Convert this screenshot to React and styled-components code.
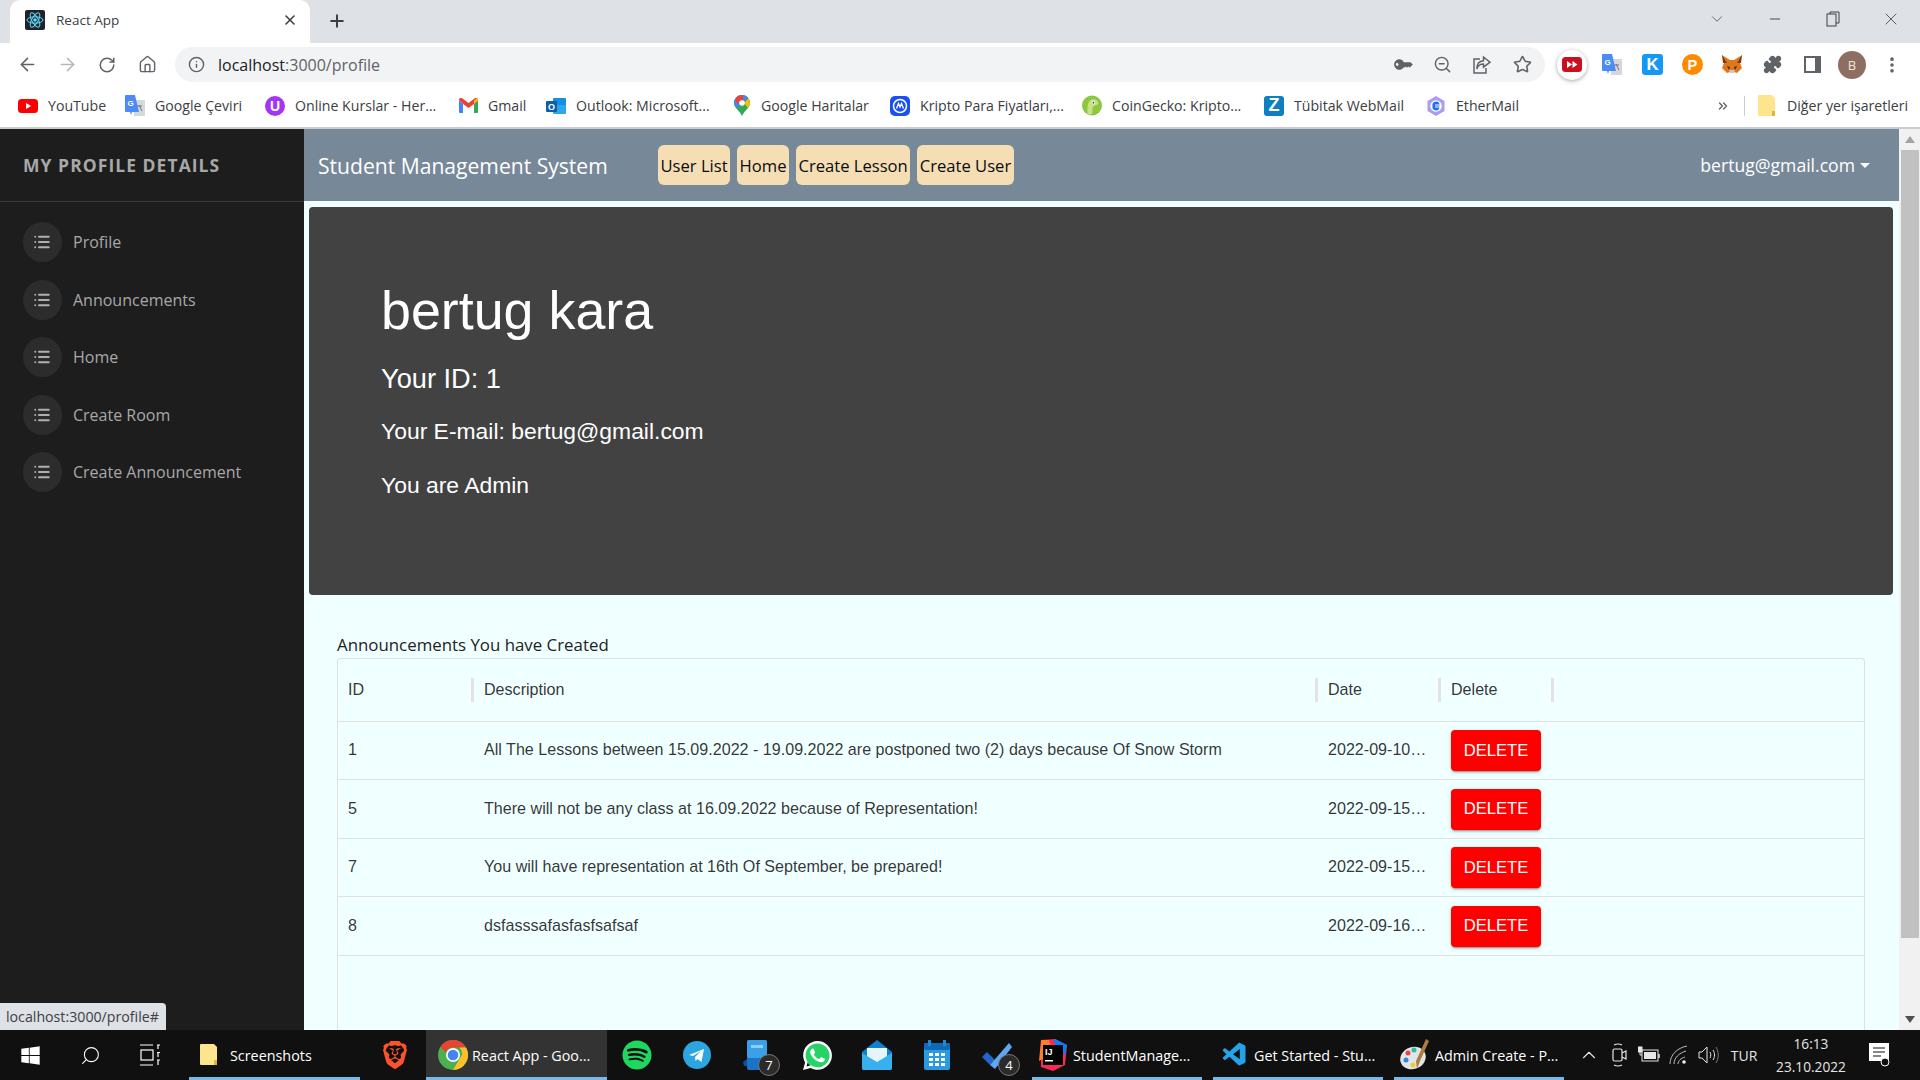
import React from "react";
import styled, { createGlobalStyle } from "styled-components";
import {
  ArrowLeft,
  ArrowRight,
  RotateCw,
  Home as HomeIcon,
  Info,
  ZoomOut,
  Star,
  List,
  X,
  Plus,
  ChevronDown,
  Minus,
  Search,
  ChevronUp,
  MoreVertical,
  Puzzle,
  ChevronsRight,
} from "lucide-react";
import { FaSpotify, FaWhatsapp, FaWindows, FaKey } from "react-icons/fa";
import { SiBrave } from "react-icons/si";
import { VscVscode } from "react-icons/vsc";

const UI = `"Open Sans", "Noto Sans", sans-serif`;
const ARIAL = `"Liberation Sans", Arial, sans-serif`;
const COLUMNS = "136px 844px 123px 113px 1fr";

const GlobalStyle = createGlobalStyle`
  html, body { margin: 0; padding: 0; overflow: hidden; }
  body { font-family: ${UI}; }
  * { box-sizing: border-box; }
`;

const Screen = styled.div`
  position: relative;
  width: 1920px;
  height: 1080px;
  display: flex;
  flex-direction: column;
  overflow: hidden;
  background: #fff;
`;

/* browser chrome */
const TabStrip = styled.div`
  height: 43px;
  flex: none;
  display: flex;
  align-items: stretch;
  padding-left: 10px;
  background: #dee1e6;
`;
const Tab = styled.div`
  width: 300px;
  display: flex;
  align-items: center;
  padding: 0 12px 3px 15px;
  background: #fff;
  border-radius: 10px 10px 0 0;
`;
const TabTitle = styled.span`
  flex: 1;
  margin-left: 11px;
  font-size: 13.5px;
  color: #3c4043;
`;
const NewTab = styled.div`
  width: 54px;
  display: flex;
  align-items: center;
  justify-content: center;
  padding-bottom: 2px;
  color: #3c4043;
`;
const WindowControls = styled.div`
  margin-left: auto;
  display: flex;
  align-items: center;
  padding-bottom: 5px;
  color: #3c4043;
`;
const WindowButton = styled.div`
  width: 58px;
  display: flex;
  justify-content: center;
`;
const Toolbar = styled.div`
  height: 43px;
  flex: none;
  display: flex;
  align-items: center;
  padding-left: 7px;
  background: #fff;
`;
const NavButton = styled.div`
  width: 40px;
  height: 36px;
  flex: none;
  display: flex;
  align-items: center;
  justify-content: center;
  color: ${(p) => (p.$off ? "#b6b8bb" : "#5f6368")};
`;
const AddressPill = styled.div`
  margin-left: 8px;
  width: 1370px;
  height: 35px;
  display: flex;
  align-items: center;
  padding: 0 3px 0 13px;
  background: #f1f3f4;
  border-radius: 18px;
  color: #5f6368;
`;
const AddressText = styled.div`
  flex: 1;
  margin-left: 13px;
  font-size: 16px;
  color: #5f6368;
  b { font-weight: 400; color: #202124; }
`;
const Extensions = styled.div`
  margin-left: 7px;
  display: flex;
`;
const Avatar = styled.div`
  width: 28px;
  height: 28px;
  border-radius: 50%;
  background: #8d6e63;
  color: #f1e4df;
  font-size: 13px;
  display: flex;
  align-items: center;
  justify-content: center;
`;
const YoutubeRing = styled.div`
  width: 30px;
  height: 30px;
  border-radius: 50%;
  background: #fff;
  box-shadow: 0 1px 4px rgba(0, 0, 0, 0.35);
  display: flex;
  align-items: center;
  justify-content: center;
`;
const BookmarksBar = styled.div`
  height: 43px;
  flex: none;
  display: flex;
  align-items: center;
  padding: 0 13px 2px 18px;
  background: #fff;
  border-bottom: 2px solid #c9cbce;
`;
const Bookmark = styled.div`
  width: ${(p) => p.$w}px;
  flex: none;
  display: flex;
  align-items: center;
  gap: 10px;
  font-size: 14.15px;
  color: #3c4043;
  white-space: nowrap;
`;
const BookmarkIcon = styled.span`
  width: ${(p) => p.$w || 20}px;
  height: 20px;
  flex: none;
  display: flex;
  align-items: center;
  justify-content: center;
`;
const OtherBookmarks = styled.div`
  margin-left: auto;
  display: flex;
  align-items: center;
  color: #5f6368;
`;
const Divider = styled.div`
  width: 1px;
  height: 20px;
  margin: 0 12px 0 14px;
  background: #c9cbce;
`;

/* page */
const Viewport = styled.div`
  flex: 1;
  min-height: 0;
  display: flex;
  overflow: hidden;
`;
const Sidebar = styled.aside`
  width: 304px;
  flex: none;
  background: #1d1d1d;
`;
const SidebarHeader = styled.div`
  height: 73px;
  display: flex;
  align-items: center;
  padding: 0 0 1px 23px;
  border-bottom: 1px solid #3a3a3a;
  font-size: 17.5px;
  font-weight: 700;
  letter-spacing: 1.05px;
  color: #a8a8a8;
`;
const SideList = styled.div`
  padding-top: 20px;
  padding-left: 23px;
  display: flex;
  flex-direction: column;
  gap: 17.5px;
`;
const SideItem = styled.a`
  height: 40px;
  display: flex;
  align-items: center;
  gap: 11px;
  font-size: 16px;
  color: #a8a8a8;
`;
const SideIcon = styled.span`
  width: 39px;
  height: 40px;
  padding-right: 1px;
  border-radius: 50%;
  background: #2c2c2c;
  display: flex;
  align-items: center;
  justify-content: center;
  color: #b0b0b0;
`;
const Main = styled.main`
  flex: 1;
  min-width: 0;
  background: #f0ffff;
  display: flex;
  flex-direction: column;
`;
const Navbar = styled.nav`
  height: 72px;
  flex: none;
  display: flex;
  align-items: center;
  padding: 0 29px 0 14px;
  background: #778899;
`;
const Brand = styled.div`
  width: 340px;
  font-size: 21.1px;
  color: #fff;
`;
const NavLinks = styled.div`
  display: flex;
  gap: 7px;
`;
const NavLink = styled.button`
  height: 40px;
  padding: 0 2.5px;
  border: 0;
  border-radius: 6px;
  background: #f5deb3;
  color: #0a0a14;
  font-family: ${UI};
  font-size: 16.6px;
`;
const UserMenu = styled.div`
  margin-left: auto;
  display: flex;
  align-items: center;
  gap: 5px;
  font-size: 17.6px;
  color: #fff;
  &::after {
    content: "";
    border-top: 5.5px solid #fff;
    border-left: 5.5px solid transparent;
    border-right: 5.5px solid transparent;
  }
`;
const ProfileCard = styled.section`
  height: 388px;
  flex: none;
  margin: 6px 6px 0 5px;
  padding: 70px 0 0 72px;
  background: #424242;
  border-radius: 4px;
  color: #fff;
  font-family: ${ARIAL};
`;
const Name = styled.h1`
  margin: 0 0 19px;
  font-size: 53.8px;
  line-height: 66px;
  font-weight: 400;
`;
const IdLine = styled.h3`
  margin: 0 0 22px;
  font-size: 27.2px;
  line-height: 33px;
  font-weight: 400;
`;
const InfoLine = styled.h4`
  margin: 0 0 25px;
  font-size: 22.9px;
  line-height: 29px;
  font-weight: 400;
`;
const TableSection = styled.section`
  flex: 1;
  min-height: 0;
  padding: 38px 34px 0 33px;
  display: flex;
  flex-direction: column;
`;
const TableTitle = styled.div`
  height: 25px;
  font-size: 16.85px;
  line-height: 24px;
  color: #222;
`;
const Grid = styled.div`
  flex: 1;
  border: 1px solid #e0e0e0;
  border-bottom: 0;
  border-radius: 4px 4px 0 0;
  font-family: ${ARIAL};
  font-size: 16.1px;
  color: rgba(0, 0, 0, 0.8);
`;
const GridHeader = styled.div`
  height: 63px;
  display: grid;
  grid-template-columns: ${COLUMNS};
  align-items: center;
  border-bottom: 1px solid #e0e0e0;
`;
const HeaderCell = styled.div`
  height: 24px;
  padding: 0 10px;
  line-height: 22px;
  border-right: ${(p) => (p.$plain ? "0" : "3px solid #e4e2e4")};
`;
const GridRow = styled.div`
  height: 58.45px;
  display: grid;
  grid-template-columns: ${COLUMNS};
  align-items: center;
  border-bottom: 1px solid #e0e0e0;
`;
const Cell = styled.div`
  padding: 0 10px 2px;
  white-space: nowrap;
`;
const DeleteButton = styled.button`
  display: block;
  width: 90px;
  height: 41px;
  margin-bottom: -2px;
  border: 0;
  border-radius: 4px;
  background: #ff0000;
  color: #fff;
  font-family: ${ARIAL};
  font-size: 16.6px;
  box-shadow: 0 3px 1px -2px rgba(0, 0, 0, 0.2), 0 2px 2px rgba(0, 0, 0, 0.14), 0 1px 5px rgba(0, 0, 0, 0.12);
`;
const Scrollbar = styled.div`
  width: 21px;
  flex: none;
  display: flex;
  flex-direction: column;
  align-items: center;
  padding: 0 1px 0 2px;
  background: #f1f1f1;
`;
const ScrollArrow = styled.div`
  height: 21px;
  flex: none;
  display: flex;
  align-items: center;
  justify-content: center;
  &::after {
    content: "";
    border-left: 5px solid transparent;
    border-right: 5px solid transparent;
    ${(p) => (p.$down ? "border-top: 7px solid #505050;" : "border-bottom: 7px solid #a3a3a3;")}
  }
`;
const ScrollThumb = styled.div`
  width: 100%;
  height: 788px;
  background: #c1c1c1;
`;
const ScrollSpace = styled.div`
  flex: 1;
`;
const StatusBubble = styled.div`
  position: absolute;
  left: 0;
  bottom: 50px;
  height: 27px;
  padding: 0 7px 0 6px;
  display: flex;
  align-items: center;
  background: #dee1e6;
  border-top-right-radius: 4px;
  font-size: 14.2px;
  color: #3c4043;
`;

/* taskbar */
const Taskbar = styled.footer`
  height: 50px;
  flex: none;
  display: flex;
  align-items: stretch;
  background: #101010;
  color: #fff;
`;
const TaskSlot = styled.div`
  position: relative;
  width: 60px;
  flex: none;
  margin-left: ${(p) => p.$ml || 0}px;
  display: flex;
  align-items: center;
  justify-content: center;
`;
const TaskApp = styled.div`
  width: ${(p) => p.$w}px;
  flex: none;
  margin-left: ${(p) => p.$ml || 0}px;
  display: flex;
  align-items: center;
  gap: ${(p) => p.$gap}px;
  padding: 3px 0 0 ${(p) => p.$pad}px;
  font-size: 14.35px;
  white-space: nowrap;
  background: ${(p) => (p.$active ? "#333" : "transparent")};
  border-bottom: 3px solid #76b9ed;
`;
const CountBadge = styled.span`
  position: absolute;
  right: 7px;
  bottom: 4px;
  width: 22px;
  height: 22px;
  border-radius: 50%;
  background: #2b2b2b;
  border: 1px solid #777;
  font-size: 13px;
  display: flex;
  align-items: center;
  justify-content: center;
`;
const WhatsappMark = styled.span`
  position: relative;
  width: 33px;
  height: 33px;
  display: flex;
  align-items: center;
  justify-content: center;
  color: #fff;
  &::before {
    content: "";
    position: absolute;
    inset: 4px;
    border-radius: 50%;
    background: #25d366;
  }
  svg { position: relative; }
`;
const Tray = styled.div`
  margin-left: 10px;
  flex: 1;
  display: flex;
  align-items: center;
`;
const TrayIcon = styled.span`
  width: 30px;
  flex: none;
  display: flex;
  justify-content: center;
  color: #e6e6e6;
`;
const TrayLang = styled.span`
  width: 40px;
  margin-right: 4px;
  text-align: center;
  font-size: 14px;
  color: #e6e6e6;
`;
const Clock = styled.div`
  width: 90px;
  margin-left: -2px;
  text-align: center;
  font-size: 13.7px;
  line-height: 23px;
  color: #e6e6e6;
`;
const Notify = styled.span`
  margin-left: 13px;
  display: flex;
`;

const ReactLogo = () => (
  <svg width="20" height="20" viewBox="0 0 20 20">
    <rect width="20" height="20" rx="2" fill="#20232a" />
    <circle cx="10" cy="10" r="1.8" fill="#61dafb" />
    <g fill="none" stroke="#61dafb" strokeWidth="1">
      <ellipse cx="10" cy="10" rx="8" ry="3.2" />
      <ellipse cx="10" cy="10" rx="8" ry="3.2" transform="rotate(60 10 10)" />
      <ellipse cx="10" cy="10" rx="8" ry="3.2" transform="rotate(120 10 10)" />
    </g>
  </svg>
);
const Youtube = ({ w = 20, h = 14, fill = "#f00" }) => (
  <svg width={w} height={h} viewBox="0 0 20 14">
    <rect width="20" height="14" rx="3.5" fill={fill} />
    <path d="M8 4l5.2 3L8 10z" fill="#fff" />
  </svg>
);
const FastForward = () => (
  <svg width="20" height="15" viewBox="0 0 20 15">
    <rect width="20" height="15" rx="3.5" fill="#cc0f1e" />
    <path d="M5 4l5 3.500-5 3.500zM10.500 4l5 3.500-5 3.500z" fill="#fff" />
  </svg>
);
const ShareIcon = () => (
  <svg width="20" height="20" viewBox="0 0 20 20" fill="none" stroke="#5f6368" strokeWidth="1.5">
    <path d="M8 4H2v14h12v-5" />
    <path d="M11.500 2l6.500 5.200-6.500 5V9C8 9 6 10.500 4.800 14c0-5 2.400-8 6.700-8.300z" />
  </svg>
);
const Translate = () => (
  <svg width="20" height="22" viewBox="0 0 20 22">
    <path d="M8 5h11a1 1 0 0 1 1 1v14a1 1 0 0 1-1 1H9z" fill="#d5d7da" />
    <path d="M14 10l3 6m-6-5h6" stroke="#70757a" strokeWidth="1" fill="none" />
    <path d="M1 0h9l4 17H7l-1 3-1-3H1a1 1 0 0 1-1-1V1a1 1 0 0 1 1-1z" fill="#4c8bf5" />
    <text x="2.5" y="11" fontSize="8" fontWeight="700" fill="#fff" fontFamily="Liberation Sans">G</text>
  </svg>
);
const Letter = ({ bg, color = "#fff", round, text, size = 20, fs = 14 }) => (
  <svg width={size} height={size} viewBox="0 0 20 20">
    {round ? <circle cx="10" cy="10" r="10" fill={bg} /> : <rect width="20" height="20" rx="3" fill={bg} />}
    <text x="10" y="15" textAnchor="middle" fontSize={fs} fontWeight="700" fill={color} fontFamily="Liberation Sans">{text}</text>
  </svg>
);
const CoinMarket = () => (
  <svg width="20" height="20" viewBox="0 0 20 20">
    <rect width="20" height="20" rx="5" fill="#1a50f0" />
    <circle cx="10" cy="10" r="6.500" fill="none" stroke="#fff" strokeWidth="1.500" />
    <path d="M6.500 12.500l2-5 1.500 3.500 1.500-3.500 2 5" fill="none" stroke="#fff" strokeWidth="1.300" />
  </svg>
);
const Gmail = () => (
  <svg width="19" height="15" viewBox="0 0 19 15">
    <path d="M0 2v12a1 1 0 0 0 1 1h3V6z" fill="#4285f4" />
    <path d="M19 2v12a1 1 0 0 1-1 1h-3V6z" fill="#34a853" />
    <path d="M0 2c0-2 2-2.500 3.500-1.500L9.500 5l6-4.500C17-.5 19 0 19 2l-4 4-5.500 4L4 6z" fill="#ea4335" />
    <path d="M15 6l4-4c0-1-.5-1.600-1-1.800L15 2.500z" fill="#fbbc04" />
  </svg>
);
const Outlook = () => (
  <svg width="20" height="20" viewBox="0 0 20 20">
    <rect x="7" y="2" width="13" height="15" rx="1" fill="#1490df" />
    <path d="M7 9h13v8a1 1 0 0 1-1 1H8a1 1 0 0 1-1-1z" fill="#28a8ea" />
    <rect y="5" width="11" height="11" rx="1" fill="#0f5ea8" />
    <text x="5.500" y="14" textAnchor="middle" fontSize="9" fontWeight="700" fill="#fff" fontFamily="Liberation Sans">O</text>
  </svg>
);
const Maps = () => (
  <svg width="16" height="21" viewBox="0 0 16 21">
    <path d="M8 0a8 8 0 0 1 8 8c0 5-6 8-8 13-2-5-8-8-8-13a8 8 0 0 1 8-8z" fill="#34a853" />
    <path d="M8 0a8 8 0 0 1 6.500 3.300L3 13C1 11 0 9.500 0 8a8 8 0 0 1 8-8z" fill="#4285f4" />
    <path d="M3 1.800A8 8 0 0 1 8 0l2 3-6 6-3-4z" fill="#ea4335" />
    <path d="M14.500 3.300A8 8 0 0 1 16 8c0 1.800-1 3.500-2 5L10 8z" fill="#fbbc04" />
    <circle cx="8" cy="8" r="2.800" fill="#fff" />
  </svg>
);
const Gecko = () => (
  <svg width="21" height="21" viewBox="0 0 21 21">
    <circle cx="10.500" cy="10.500" r="10.500" fill="#8dc63f" />
    <path d="M6 20C5 12 6 5 11 4c4-1 7 3 6 5-2 2-6 1-6 5 0 3 0 5-1 6z" fill="#c7e08a" />
    <circle cx="12" cy="7.500" r="1.800" fill="#fff" />
    <circle cx="12" cy="7.500" r="0.900" fill="#333" />
  </svg>
);
const Ether = () => (
  <svg width="20" height="20" viewBox="0 0 20 20">
    <path d="M10 0l8.500 5v10L10 20l-8.500-5V5z" fill="#a99cf2" />
    <circle cx="10" cy="10" r="5.800" fill="#fff" />
    <path d="M6.500 10a3.500 3.500 0 0 1 7-1.500H9v1h4.500v1H9v1h4.500A3.500 3.500 0 0 1 6.500 10z" fill="#1a6ff0" />
  </svg>
);
const Folder = ({ w = 18, h = 22 }) => (
  <svg width={w} height={h} viewBox="0 0 18 22">
    <path d="M1 0h13l3 3v17a1 1 0 0 1-1 1H1a1 1 0 0 1-1-1V1a1 1 0 0 1 1-1z" fill="#fde58e" />
    <path d="M14 16h3v4a1 1 0 0 1-1 1h-2z" fill="#e3b23c" />
  </svg>
);
const Fox = () => (
  <svg width="22" height="20" viewBox="0 0 22 20">
    <path d="M1 0l8 5h4l8-5-2 8 2 5-5 5-3-1h-4l-3 1-5-5 2-5z" fill="#e2761b" />
    <path d="M6 11l3 1-1 3zM16 11l-3 1 1 3z" fill="#233447" />
    <path d="M8 15h6l-1 3H9z" fill="#d7c1b3" />
    <path d="M1 0l5 8-4 0zM21 0l-5 8 4 0z" fill="#763d16" />
  </svg>
);
const SidePanel = () => (
  <svg width="17" height="17" viewBox="0 0 17 17">
    <rect width="17" height="17" fill="#5f6368" />
    <rect x="2" y="2" width="9" height="13" fill="#fff" />
  </svg>
);
const Chrome = () => (
  <svg width="30" height="30" viewBox="0 0 30 30">
    <circle cx="15" cy="15" r="15" fill="#4caf50" />
    <path d="M15 0a15 15 0 0 1 13 7.500H15a7.500 7.500 0 0 0-7 5L2.400 7A15 15 0 0 1 15 0z" fill="#ea4335" />
    <path d="M28 7.500A15 15 0 0 1 15 30l6.500-11a7.500 7.500 0 0 0 0-11.500z" fill="#fbc02d" />
    <circle cx="15" cy="15" r="7" fill="#fff" />
    <circle cx="15" cy="15" r="5.300" fill="#4285f4" />
  </svg>
);
const Telegram = () => (
  <svg width="28" height="28" viewBox="0 0 28 28">
    <circle cx="14" cy="14" r="14" fill="#2ca5e0" />
    <path d="M6 14l15-6-2.500 13-4-3-2 2-.5-4 6-6-8 5z" fill="#fff" />
  </svg>
);
const PhoneApp = () => (
  <svg width="28" height="30" viewBox="0 0 28 30">
    <rect x="4" y="0" width="20" height="30" rx="2" fill="#1a74c4" />
    <rect x="4" y="0" width="20" height="18" rx="2" fill="#3aa0e8" />
    <rect x="8" y="5" width="12" height="3" fill="#8cd0f5" />
    <path d="M0 22l4-3v7H1z" fill="#0f4f9a" />
  </svg>
);
const Mail = () => (
  <svg width="30" height="30" viewBox="0 0 30 30">
    <path d="M15 0l15 12v16a2 2 0 0 1-2 2H2a2 2 0 0 1-2-2V12z" fill="#1280d0" />
    <path d="M5 8h20v10l-10 6-10-6z" fill="#e6f4fc" />
    <path d="M0 13l15 9 15-9v15a2 2 0 0 1-2 2H2a2 2 0 0 1-2-2z" fill="#37b0ee" />
  </svg>
);
const Calendar = () => (
  <svg width="26" height="30" viewBox="0 0 26 30">
    <rect y="3" width="26" height="27" rx="2" fill="#2a9be0" />
    <rect y="3" width="26" height="7" rx="2" fill="#1068b8" />
    <rect x="4" y="0" width="3" height="6" fill="#1f88d0" />
    <rect x="19" y="0" width="3" height="6" fill="#1f88d0" />
    <g fill="#fff">
      <rect x="5" y="13" width="4" height="3" />
      <rect x="11" y="13" width="4" height="3" />
      <rect x="17" y="13" width="4" height="3" />
      <rect x="5" y="18" width="4" height="3" />
      <rect x="11" y="18" width="4" height="3" />
      <rect x="17" y="18" width="4" height="3" />
      <rect x="5" y="23" width="4" height="3" />
      <rect x="11" y="23" width="4" height="3" />
      <rect x="17" y="23" width="4" height="3" />
    </g>
  </svg>
);
const Todo = () => (
  <svg width="30" height="28" viewBox="0 0 30 28">
    <path d="M0 16l5-5 8 8-5 5z" fill="#2564cf" />
    <path d="M8 24L27 2l3 4L13 28z" fill="#5ea7f2" />
  </svg>
);
const IntelliJ = () => (
  <svg width="28" height="32" viewBox="0 0 28 32">
    <path d="M2 1l14-1 12 6-2 20-12 6-12-4z" fill="#fe2857" />
    <path d="M16 0l12 6-2 10L14 2z" fill="#087cfa" />
    <path d="M2 1l8 0 4 14L0 22z" fill="#fe7c2e" />
    <rect x="4" y="6" width="20" height="20" fill="#000" />
    <text x="6" y="16" fontSize="9" fontWeight="700" fill="#fff" fontFamily="Liberation Sans">IJ</text>
    <rect x="6" y="21" width="8" height="1.500" fill="#fff" />
  </svg>
);
const Palette = () => (
  <svg width="30" height="32" viewBox="0 0 30 32">
    <ellipse cx="13" cy="19" rx="13" ry="11" fill="#dfe6ea" transform="rotate(-20 13 19)" />
    <circle cx="8" cy="14" r="2.500" fill="#e44" />
    <circle cx="14" cy="11" r="2.500" fill="#3b9" />
    <circle cx="6" cy="21" r="2.500" fill="#38c" />
    <circle cx="13" cy="26" r="2.500" fill="#ec3" />
    <path d="M26 0l3 2-9 20-3 8-1-8z" fill="#b07b3e" />
  </svg>
);
const TaskView = () => (
  <svg width="20" height="22" viewBox="0 0 20 22" fill="none" stroke="#fff" strokeWidth="1.200">
    <rect x="1" y="6" width="12" height="10" />
    <path d="M0 1h13M0 21h13M17 1h3M17 8.500h3M17 16h3" />
    <path d="M18 1v4M18 8v5M18 16v5" />
  </svg>
);
const MeetIcon = () => (
  <svg width="15" height="28" viewBox="0 0 15 28" fill="none" stroke="#e6e6e6" strokeWidth="1.200">
    <rect x="1" y="8" width="9" height="12" rx="1.500" />
    <path d="M10 12l4-2v8l-4-2M2 4c3-1.500 5-1.500 8 0M2 24c3 1.500 5 1.500 8 0" />
  </svg>
);
const Battery = () => (
  <svg width="22" height="18" viewBox="0 0 22 18" fill="none" stroke="#e6e6e6">
    <rect x="4" y="4" width="16" height="11" />
    <rect x="6" y="6" width="12" height="7" fill="#e6e6e6" stroke="none" />
    <path d="M21 8v4" strokeWidth="1.500" />
    <rect x="0" y="1" width="4" height="5" fill="#e6e6e6" />
    <path d="M2 6v3h2" />
  </svg>
);
const Wifi = () => (
  <svg width="20" height="20" viewBox="0 0 20 20" fill="none" stroke="#bbb">
    <path d="M1 19C1 10 8 3 18 1M5 19C5 13 10 8 17 6M9 19c0-3 3-6 7-7" />
    <circle cx="15" cy="17" r="1.800" fill="#eee" stroke="none" />
  </svg>
);
const Speaker = () => (
  <svg width="22" height="20" viewBox="0 0 22 20" fill="none" stroke="#e6e6e6">
    <path d="M1 7h3l5-5v16l-5-5H1z" />
    <path d="M12 7c1 2 1 4 0 6M15 5c2 3 2 7 0 10" />
    <path d="M18 2c3 5 3 11 0 16" stroke="#777" />
  </svg>
);
const NotifyIcon = () => (
  <svg width="22" height="24" viewBox="0 0 22 24">
    <path d="M0 0h20v18H0z" fill="#fff" />
    <path d="M4 5h12M4 9h12M4 13h8" stroke="#101010" strokeWidth="1.200" />
    <circle cx="16" cy="19" r="4" fill="#101010" stroke="#fff" />
  </svg>
);

const bookmarks = [
  { w: 107, name: "YouTube", icon: <Youtube /> },
  { w: 140, name: "Google Çeviri", icon: <Translate /> },
  { w: 194, name: "Online Kurslar - Her...", icon: <Letter round bg="#a435f0" text="U" /> },
  { w: 87, name: "Gmail", icon: <Gmail />, iconW: 19 },
  { w: 187, name: "Outlook: Microsoft...", icon: <Outlook /> },
  { w: 157, name: "Google Haritalar", icon: <Maps />, iconW: 18 },
  { w: 192, name: "Kripto Para Fiyatları,...", icon: <CoinMarket /> },
  { w: 182, name: "CoinGecko: Kripto...", icon: <Gecko /> },
  { w: 162, name: "Tübitak WebMail", icon: <Letter bg="#0f7fc0" text="Z" fs={18} size={20} /> },
  { w: 140, name: "EtherMail", icon: <Ether /> },
];

const sideItems = ["Profile", "Announcements", "Home", "Create Room", "Create Announcement"];
const navLinks = ["User List", "Home", "Create Lesson", "Create User"];

const announcements = [
  { id: 1, text: "All The Lessons between 15.09.2022 - 19.09.2022 are postponed two (2) days because Of Snow Storm", date: "2022-09-10…" },
  { id: 5, text: "There will not be any class at 16.09.2022 because of Representation!", date: "2022-09-15…" },
  { id: 7, text: "You will have representation at 16th Of September, be prepared!", date: "2022-09-15…" },
  { id: 8, text: "dsfasssafasfasfsafsaf", date: "2022-09-16…" },
];

export default function App() {
  return (
    <Screen>
      <GlobalStyle />
      <TabStrip>
        <Tab>
          <ReactLogo />
          <TabTitle>React App</TabTitle>
          <X size={16} color="#3c4043" strokeWidth={2.4} />
        </Tab>
        <NewTab><Plus size={20} strokeWidth={2.4} /></NewTab>
        <WindowControls>
          <WindowButton><ChevronDown size={18} strokeWidth={1} /></WindowButton>
          <WindowButton><Minus size={16} strokeWidth={1.4} /></WindowButton>
          <WindowButton>
            <svg width="14" height="16" viewBox="0 0 14 16" fill="none" stroke="#3c4043">
              <rect x="1" y="3" width="9" height="12" />
              <path d="M4 3V1h9v11h-3" />
            </svg>
          </WindowButton>
          <WindowButton><X size={20} strokeWidth={1} /></WindowButton>
        </WindowControls>
      </TabStrip>

      <Toolbar>
        <NavButton><ArrowLeft size={21} strokeWidth={1.8} /></NavButton>
        <NavButton $off><ArrowRight size={21} strokeWidth={1.8} /></NavButton>
        <NavButton><RotateCw size={18} strokeWidth={2} /></NavButton>
        <NavButton><HomeIcon size={19} strokeWidth={1.8} /></NavButton>
        <AddressPill>
          <Info size={17} strokeWidth={2} />
          <AddressText><b>localhost</b>:3000/profile</AddressText>
          <NavButton><FaKey size={15} style={{ transform: "rotate(-45deg) scaleX(-1)" }} /></NavButton>
          <NavButton><ZoomOut size={19} strokeWidth={1.8} /></NavButton>
          <NavButton><ShareIcon /></NavButton>
          <NavButton><Star size={19} strokeWidth={2} /></NavButton>
        </AddressPill>
        <Extensions>
          <NavButton><YoutubeRing><FastForward /></YoutubeRing></NavButton>
          <NavButton><Translate /></NavButton>
          <NavButton><Letter bg="#1597f5" text="K" size={21} fs={16} /></NavButton>
          <NavButton><Letter round bg="#ff8a00" text="P" size={21} /></NavButton>
          <NavButton><Fox /></NavButton>
          <NavButton><Puzzle size={19} fill="#5f6368" /></NavButton>
          <NavButton><SidePanel /></NavButton>
          <NavButton><Avatar>B</Avatar></NavButton>
          <NavButton><MoreVertical size={20} strokeWidth={2.4} /></NavButton>
        </Extensions>
      </Toolbar>

      <BookmarksBar>
        {bookmarks.map((b) => (
          <Bookmark key={b.name} $w={b.w}>
            <BookmarkIcon $w={b.iconW}>{b.icon}</BookmarkIcon>
            {b.name}
          </Bookmark>
        ))}
        <OtherBookmarks>
          <ChevronsRight size={14} strokeWidth={2.4} />
          <Divider />
          <Bookmark $w={150}>
            <BookmarkIcon><Folder /></BookmarkIcon>
            Diğer yer işaretleri
          </Bookmark>
        </OtherBookmarks>
      </BookmarksBar>

      <Viewport>
        <Sidebar>
          <SidebarHeader>MY PROFILE DETAILS</SidebarHeader>
          <SideList>
            {sideItems.map((item) => (
              <SideItem key={item}>
                <SideIcon><List size={18} strokeWidth={2.6} /></SideIcon>
                {item}
              </SideItem>
            ))}
          </SideList>
        </Sidebar>
        <Main>
          <Navbar>
            <Brand>Student Management System</Brand>
            <NavLinks>
              {navLinks.map((link) => <NavLink key={link}>{link}</NavLink>)}
            </NavLinks>
            <UserMenu>bertug@gmail.com</UserMenu>
          </Navbar>
          <ProfileCard>
            <Name>bertug kara</Name>
            <IdLine>Your ID: 1</IdLine>
            <InfoLine>Your E-mail: bertug@gmail.com</InfoLine>
            <InfoLine>You are Admin</InfoLine>
          </ProfileCard>
          <TableSection>
            <TableTitle>Announcements You have Created</TableTitle>
            <Grid>
              <GridHeader>
                <HeaderCell>ID</HeaderCell>
                <HeaderCell>Description</HeaderCell>
                <HeaderCell>Date</HeaderCell>
                <HeaderCell>Delete</HeaderCell>
                <HeaderCell $plain />
              </GridHeader>
              {announcements.map((a) => (
                <GridRow key={a.id}>
                  <Cell>{a.id}</Cell>
                  <Cell>{a.text}</Cell>
                  <Cell>{a.date}</Cell>
                  <Cell><DeleteButton>DELETE</DeleteButton></Cell>
                </GridRow>
              ))}
            </Grid>
          </TableSection>
        </Main>
        <Scrollbar>
          <ScrollArrow />
          <ScrollThumb />
          <ScrollSpace />
          <ScrollArrow $down />
        </Scrollbar>
      </Viewport>

      <StatusBubble>localhost:3000/profile#</StatusBubble>

      <Taskbar>
        <TaskSlot><FaWindows size={21} /></TaskSlot>
        <TaskSlot><Search size={21} strokeWidth={1.2} style={{ transform: "scaleX(-1)" }} /></TaskSlot>
        <TaskSlot><TaskView /></TaskSlot>
        <TaskApp $w={171} $ml={9} $pad={11} $gap={12}><Folder w={18} h={24} />Screenshots</TaskApp>
        <TaskSlot $ml={5}><SiBrave size={28} color="#fb542b" /></TaskSlot>
        <TaskApp $w={181} $ml={1} $pad={12} $gap={4} $active><Chrome />React App - Goo...</TaskApp>
        <TaskSlot><FaSpotify size={30} color="#1ed760" /></TaskSlot>
        <TaskSlot><Telegram /></TaskSlot>
        <TaskSlot><PhoneApp /><CountBadge>7</CountBadge></TaskSlot>
        <TaskSlot><WhatsappMark><FaWhatsapp size={33} /></WhatsappMark></TaskSlot>
        <TaskSlot><Mail /></TaskSlot>
        <TaskSlot><Calendar /></TaskSlot>
        <TaskSlot><Todo /><CountBadge>4</CountBadge></TaskSlot>
        <TaskApp $w={170} $ml={5} $pad={7} $gap={6}><IntelliJ />StudentManage...</TaskApp>
        <TaskApp $w={170} $ml={11} $pad={8} $gap={5}><VscVscode size={28} color="#23a3ea" />Get Started - Stu...</TaskApp>
        <TaskApp $w={170} $ml={11} $pad={6} $gap={5}><Palette />Admin Create - P...</TaskApp>
        <Tray>
          <TrayIcon><ChevronUp size={22} strokeWidth={1.2} /></TrayIcon>
          <TrayIcon><MeetIcon /></TrayIcon>
          <TrayIcon><Battery /></TrayIcon>
          <TrayIcon><Wifi /></TrayIcon>
          <TrayIcon><Speaker /></TrayIcon>
          <TrayLang>TUR</TrayLang>
          <Clock>16:13<br />23.10.2022</Clock>
          <Notify><NotifyIcon /></Notify>
        </Tray>
      </Taskbar>
    </Screen>
  );
}
